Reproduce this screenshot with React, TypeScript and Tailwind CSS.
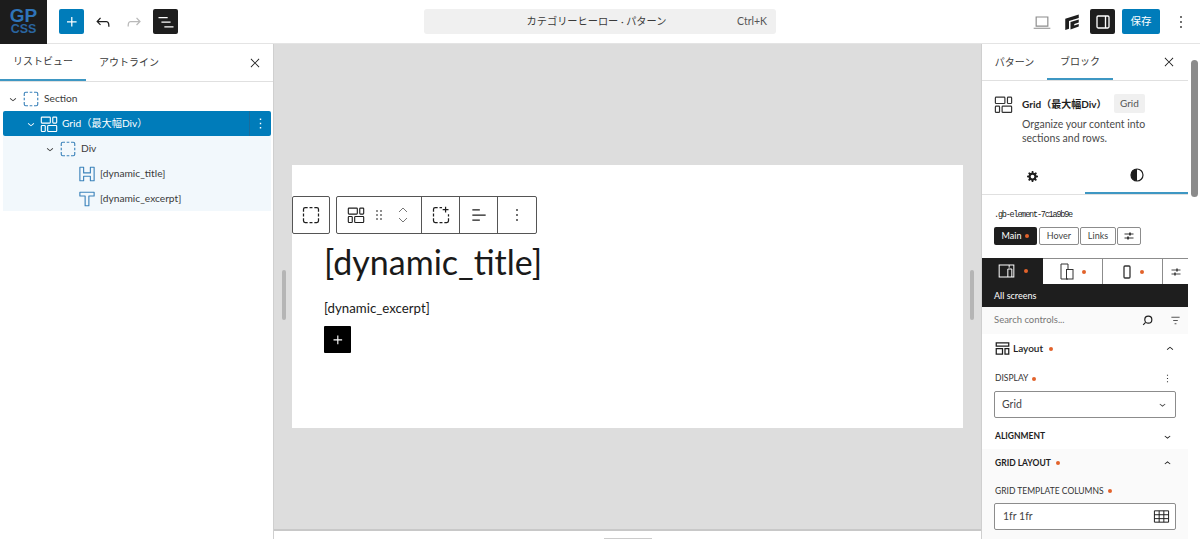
import React from 'react';

const font = { fontFamily: 'Lato, "Noto Sans CJK JP", sans-serif' };

type IconProps = { className?: string };

const Wp: React.FC<IconProps & { d: string }> = ({ d, className }) => (
  <svg viewBox="0 0 24 24" className={className} fill="currentColor">
    <path d={d} />
  </svg>
);

const PLUS = 'M11 12.5V17.5H12.5V12.5H17.5V11H12.5V6H11V11H6V12.5H11Z';
const UNDO = 'M18.3 11.7c-.6-.6-1.4-.9-2.3-.9H6.7l2.9-3.3-1.1-1-4.5 5L8.5 16l1-1-2.7-2.7H16c.5 0 .9.2 1.3.5 1 1 1 3.4 1 4.5v.3h1.5v-.2c0-1.5 0-4.3-1.5-5.7z';
const REDO = 'M15.6 6.5l-1.1 1 2.9 3.3H8c-.9 0-1.7.3-2.3.9-1.4 1.5-1.4 4.2-1.4 5.6v.2h1.5v-.3c0-1.1 0-3.5 1-4.5.3-.3.7-.5 1.3-.5h9.2L14.5 15l1.1 1.1 4.6-4.6-4.6-5z';
const LIST = 'M3 6h11v1.5H3V6zm3.5 5.5h11V13h-11v-1.5zM21 17H10v1.5h11V17z';
const CLOSE = 'm13.06 12 6.47-6.47-1.06-1.06L12 10.94 5.53 4.47 4.47 5.53 10.94 12l-6.47 6.47 1.06 1.06L12 13.06l6.47 6.47 1.06-1.06L13.06 12Z';
const MORE = 'M13 19h-2v-2h2v2zm0-6h-2v-2h2v2zm0-6h-2V5h2v2z';
const DOWN = 'M17.5 11.6L12 16l-5.5-4.4.9-1.2L12 14l4.5-3.6 1 1.2z';
const UP = 'M6.5 12.4L12 8l5.5 4.4-.9 1.2L12 10l-4.5 3.6-1-1.2z';
const DRAG = 'M8 7h2V5H8v2zm0 6h2v-2H8v2zm0 6h2v-2H8v2zm6-14v2h2V5h-2zm0 8h2v-2h-2v2zm0 6h2v-2h-2v2z';
const GEAR = 'M20.8 13.2v-2.4l-2.5-.4c-.2-.6-.4-1.1-.7-1.6l1.5-2.1-1.7-1.7-2.1 1.5c-.5-.3-1-.5-1.6-.7l-.4-2.5h-2.4l-.4 2.5c-.6.2-1.1.4-1.6.7L6.8 5 5 6.7l1.5 2.1c-.3.5-.5 1-.7 1.6l-2.5.4v2.4l2.5.4c.2.6.4 1.1.7 1.6L5 17.3 6.7 19l2.1-1.5c.5.3 1 .5 1.6.7l.4 2.5h2.4l.4-2.5c.6-.2 1.1-.4 1.6-.7l2.1 1.5 1.7-1.7-1.5-2.1c.3-.5.5-1 .7-1.6l2.6-.4zM12 15a3 3 0 1 1 0-6 3 3 0 0 1 0 6z';

const GridIcon: React.FC<IconProps> = ({ className }) => (
  <svg viewBox="0 0 24 24" className={className} fill="none" stroke="currentColor" strokeWidth="1.5">
    <rect x="1.75" y="2.75" width="12" height="8" rx="1" />
    <rect x="17" y="2.75" width="5.25" height="8" rx="1" />
    <rect x="1.75" y="14" width="5.25" height="8" rx="1" />
    <rect x="10.25" y="14" width="12" height="8" rx="1" />
  </svg>
);

const DashedBox: React.FC<IconProps> = ({ className }) => (
  <svg viewBox="0 0 24 24" className={className} fill="none" stroke="currentColor" strokeWidth="1.5">
    <path d="M3 8V5a2 2 0 0 1 2-2h3M10.25 3h3.5M16 3h3a2 2 0 0 1 2 2v3M21 10.25v3.5M21 16v3a2 2 0 0 1-2 2h-3M13.75 21h-3.5M8 21H5a2 2 0 0 1-2-2v-3M3 13.75v-3.5" />
  </svg>
);

const HeadingIcon: React.FC<IconProps> = ({ className }) => (
  <svg viewBox="0 0 24 24" className={className} fill="none" stroke="currentColor" strokeWidth="1.5" strokeLinejoin="round">
    <path d="M2.5 3h5v7.5h9V3h5v18h-5v-6h-9v6h-5z" />
  </svg>
);

const TextIcon: React.FC<IconProps> = ({ className }) => (
  <svg viewBox="0 0 24 24" className={className} fill="none" stroke="currentColor" strokeWidth="1.5" strokeLinejoin="round">
    <path d="M2.5 3h19v5h-7v13h-5V8h-7z" />
  </svg>
);

const Sliders: React.FC<IconProps> = ({ className }) => (
  <svg viewBox="0 0 24 24" className={className} fill="none" stroke="currentColor" strokeWidth="1.8">
    <path d="M3 8h18M3 16h18" />
    <path d="M14 5v6M10 13v6" strokeWidth="3" />
  </svg>
);

const Dot = () => <span className="inline-block h-[4px] w-[4px] rounded-full bg-[#e2622b]" />;

const ListRow: React.FC<{
  indent: string;
  chevron?: boolean;
  icon: React.ReactNode;
  label: string;
  selected?: boolean;
}> = ({ indent, chevron, icon, label, selected }) => (
  <div className={`flex h-[25px] items-center ${indent} ${selected ? 'rounded-[2px] bg-[#007cba] text-white' : 'text-[#3a3a3a]'}`}>
    <span className="flex w-[14px] justify-center">
      {chevron && <Wp d={DOWN} className="h-[14px] w-[14px] shrink-0" />}
    </span>
    <span className={`ml-[2px] ${selected ? 'text-white' : 'text-[#3b82ba]'}`}>{icon}</span>
    <span className="ml-[4px] whitespace-nowrap pt-[1px] text-[10.2px]">{label}</span>
    {selected && (
      <span className="ml-auto flex h-[25px] w-[22px] items-center justify-center border-l border-[#1b6c9c]">
        <Wp d={MORE} className="h-[17px] w-[17px]" />
      </span>
    )}
  </div>
);

const ListView = () => (
  <aside className="flex w-[274px] shrink-0 flex-col border-r border-[#cfcfcf] bg-white">
    <div className="flex h-[38px] shrink-0 items-stretch border-b border-[#e0e0e0] text-[#3a3a3a]">
      <div className="flex w-[86px] items-center justify-center border-b-2 border-[#3e97c3] text-[10px]">リストビュー</div>
      <div className="flex w-[86px] items-center justify-center text-[10px]">アウトライン</div>
      <div className="ml-auto flex w-[38px] items-center justify-center pl-[2px]">
        <Wp d={CLOSE} className="h-[14px] w-[14px] text-[#1e1e1e]" />
      </div>
    </div>
    <div className="pl-[3px] pr-[2px] pt-[4px]">
      <ListRow indent="pl-[3px]" chevron icon={<DashedBox className="h-[18px] w-[18px]" />} label="Section" />
      <ListRow indent="pl-[21px]" chevron selected icon={<GridIcon className="h-[18px] w-[18px]" />} label="Grid（最大幅Div）" />
      <div className="bg-[#f2f8fc]">
        <ListRow indent="pl-[40px]" chevron icon={<DashedBox className="h-[18px] w-[18px]" />} label="Div" />
        <ListRow indent="pl-[59px]" icon={<HeadingIcon className="h-[18px] w-[18px]" />} label="[dynamic_title]" />
        <ListRow indent="pl-[59px]" icon={<TextIcon className="h-[18px] w-[18px]" />} label="[dynamic_excerpt]" />
      </div>
    </div>
  </aside>
);

const ToolButton: React.FC<{ children: React.ReactNode; last?: boolean }> = ({ children, last }) => (
  <div className={`flex h-full w-[38px] items-center justify-center ${last ? '' : 'border-r border-[#555555]'}`}>{children}</div>
);

const Canvas = () => (
  <main className="relative flex min-w-0 flex-1 flex-col bg-[#dddddd]">
    <div className="flex-1 pl-[18px] pt-[121px]">
      <div className="relative h-[263px] w-[671px] bg-white pl-[32px] pt-[72px] text-[#1a1a1a]">
        <h1 className="text-[34px] leading-[50px]">[dynamic_title]</h1>
        <p className="mt-[11px] text-[13.25px] leading-[20px]">[dynamic_excerpt]</p>
        <div className="mt-[8px] flex h-[27px] w-[27px] items-center justify-center rounded-[1px] bg-black text-white">
          <Wp d={PLUS} className="h-[18px] w-[18px]" />
        </div>
        {/* floating block toolbar */}
        <div className="absolute left-0 top-[31px] flex h-[38px] gap-[6px] text-[#1e1e1e]">
          <div className="flex h-[38px] w-[38px] items-center justify-center rounded-[2px] border border-[#555555] bg-white">
            <DashedBox className="h-[20px] w-[20px]" />
          </div>
          <div className="flex h-[38px] items-center rounded-[2px] border border-[#555555] bg-white">
            <div className="flex h-full w-[85px] items-center border-r border-[#555555] pl-[10px]">
              <GridIcon className="h-[18px] w-[18px]" />
              <Wp d={DRAG} className="ml-[6px] h-[16px] w-[16px]" />
              <div className="ml-[11px] flex flex-col gap-[4px] text-[#777777]">
                <svg viewBox="0 0 10 6" className="h-[6px] w-[10px]" fill="none" stroke="currentColor"><path d="M1 5l4-4 4 4" /></svg>
                <svg viewBox="0 0 10 6" className="h-[6px] w-[10px]" fill="none" stroke="currentColor"><path d="M1 1l4 4 4-4" /></svg>
              </div>
            </div>
            <ToolButton>
              <svg viewBox="0 0 24 24" className="h-[20px] w-[20px]" fill="none" stroke="currentColor" strokeWidth="1.5">
                <path d="M3 8V5a2 2 0 0 1 2-2h3M10.25 3h3M3 10.25v3.5M3 16v3a2 2 0 0 0 2 2h3M10.25 21h3.5M16 21h3a2 2 0 0 0 2-2v-3M21 13.75V11M17.5 2v7M14 5.5h7" />
              </svg>
            </ToolButton>
            <ToolButton>
              <Wp d="M4 5h9v1.5H4V5zm0 6.25h16v1.5H4v-1.5zM4 17.5h9V19H4v-1.5z" className="h-[20px] w-[20px]" />
            </ToolButton>
            <ToolButton last>
              <Wp d={MORE} className="h-[20px] w-[20px]" />
            </ToolButton>
          </div>
        </div>
      </div>
    </div>
    <div className="flex h-[10px] shrink-0 justify-center border-t-2 border-[#c8c8c8] bg-white">
      <div className="mt-[7px] h-[2px] w-[48px] bg-[#cccccc]" />
    </div>
    {/* drag handles for the side panels */}
    <div className="absolute left-[8px] top-[226px] h-[50px] w-[4px] rounded-full bg-[#b5b5b5]" />
    <div className="absolute right-[7px] top-[226px] h-[50px] w-[4px] rounded-full bg-[#b5b5b5]" />
  </main>
);

const DeviceTab: React.FC<{ children: React.ReactNode; active?: boolean; w: string }> = ({ children, active, w }) => (
  <div className={`flex h-[26px] shrink-0 items-center justify-center gap-[8px] ${w} ${active ? 'bg-[#1e1e1e] text-white' : 'border-r border-t border-[#8c8c8c] bg-white text-[#333333]'}`}>
    {children}
  </div>
);

const SettingsPanel = () => (
  <aside className="relative flex w-[219px] shrink-0 flex-col overflow-hidden border-l border-[#cfcfcf] bg-white pr-[12px] text-[#1e1e1e]">
    <div className="flex h-[37px] shrink-0 items-stretch border-b border-[#e0e0e0] text-[10px] text-[#3a3a3a]">
      <div className="flex w-[65px] items-center justify-center">パターン</div>
      <div className="flex w-[66px] items-center justify-center border-b-2 border-[#3e97c3]">ブロック</div>
      <div className="ml-auto flex w-[38px] items-center justify-center">
        <Wp d={CLOSE} className="h-[14px] w-[14px] text-[#1e1e1e]" />
      </div>
    </div>
    <div className="flex h-[78px] shrink-0 px-[12px] pt-[13px]">
      <GridIcon className="mt-[1px] h-[19px] w-[19px] shrink-0 text-[#333333]" />
      <div className="ml-[9px]">
        <div className="flex items-start">
          <span className="w-[92px] whitespace-nowrap pt-[3px] text-[10px] font-bold">Grid（最大幅Div）</span>
          <span className="rounded-[2px] bg-[#f0f0f0] px-[6px] py-[3px] text-[10px] leading-[13px] text-[#555555]">Grid</span>
        </div>
        <p className="mt-[4px] w-[135px] text-[10.5px] leading-[14px] text-[#4a4a4a]">Organize your content into sections and rows.</p>
      </div>
    </div>
    <div className="flex h-[36px] shrink-0 border-b border-[#e0e0e0]">
      <div className="flex w-[103px] items-center justify-center pr-[2px]">
        <Wp d={GEAR} className="h-[15px] w-[15px]" />
      </div>
      <div className="flex w-[103px] items-center justify-center border-b-2 border-[#3e97c3] pb-[2px] pl-[1px]">
        <svg viewBox="0 0 24 24" className="h-[16px] w-[16px]">
          <circle cx="12" cy="12" r="9" fill="none" stroke="currentColor" strokeWidth="1.8" />
          <path d="M12 3a9 9 0 0 0 0 18z" fill="currentColor" />
        </svg>
      </div>
    </div>
    <div className="px-[12px] pt-[14px]">
      <p className="whitespace-nowrap font-['Liberation_Mono',monospace] text-[8.5px] leading-[12px] tracking-[-1.2px] text-[#1e1e1e]">.gb-element-7c1a9b9e</p>
      <div className="mt-[6px] flex h-[18px] gap-[2px] text-[9px]">
        <div className="flex w-[43px] items-center justify-center gap-[4px] rounded-[2px] bg-[#1e1e1e] text-white">Main <Dot /></div>
        <div className="flex w-[40px] items-center justify-center rounded-[2px] border border-[#8c8c8c] text-[#444444]">Hover</div>
        <div className="-ml-[1px] flex w-[36px] items-center justify-center rounded-[2px] border border-[#8c8c8c] text-[#444444]">Links</div>
        <div className="-ml-[1px] flex w-[24px] items-center justify-center rounded-[2px] border border-[#8c8c8c]">
          <Sliders className="h-[12px] w-[12px]" />
        </div>
      </div>
    </div>
    <div className="mt-[13px] flex shrink-0">
      <DeviceTab active w="w-[61px]">
        <svg viewBox="0 0 24 24" className="h-[16px] w-[19px]" fill="none" stroke="currentColor" strokeWidth="1.5">
          <rect x="1" y="3" width="22" height="18" />
          <path d="M14 21V9h6v12" />
          <path d="M16 3v4" />
        </svg>
        <Dot />
      </DeviceTab>
      <DeviceTab w="w-[60px]">
        <svg viewBox="0 0 14 17" className="h-[17px] w-[14px]" fill="none" stroke="currentColor">
          <path d="M8 16H1V1h7v5" />
          <rect x="6.5" y="6.5" width="6.5" height="9.5" />
        </svg>
        <Dot />
      </DeviceTab>
      <DeviceTab w="w-[60px]">
        <svg viewBox="0 0 10 14" className="h-[14px] w-[10px]" fill="none" stroke="currentColor" strokeWidth="1.3">
          <rect x="2" y="1" width="6" height="12" rx="1" />
        </svg>
        <Dot />
      </DeviceTab>
      <DeviceTab w="w-[25px] !border-r-0">
        <Sliders className="h-[12px] w-[12px]" />
      </DeviceTab>
    </div>
    <div className="flex h-[23px] shrink-0 items-center bg-[#1e1e1e] pl-[12px] text-[9px] text-white">All screens</div>
    <div className="flex h-[27px] shrink-0 items-center bg-[#fafafa] pl-[12px] pr-[7px] text-[9.5px] text-[#777777]">
      <span>Search controls...</span>
      <svg viewBox="0 0 24 24" className="ml-auto h-[13px] w-[13px] text-[#1e1e1e]" fill="none" stroke="currentColor" strokeWidth="2.2">
        <circle cx="13.5" cy="10.5" r="6.5" />
        <path d="M8.5 15.5L4 20" />
      </svg>
      <svg viewBox="0 0 24 24" className="ml-[16px] h-[11px] w-[11px] text-[#555555]" fill="none" stroke="currentColor" strokeWidth="2.4">
        <path d="M3 5h18M7 12h10M10 19h4" />
      </svg>
    </div>
    <div className="flex h-[28px] shrink-0 items-center pl-[13px] pr-[11px] pt-[1px]">
      <svg viewBox="0 0 24 24" className="h-[15px] w-[15px]" fill="none" stroke="currentColor" strokeWidth="2">
        <path d="M2 3h20v5H2zM2 12h10v9H2zM16 12h6v9h-6z" />
      </svg>
      <span className="ml-[3px] text-[10px] font-semibold">Layout</span>
      <span className="ml-[6px] flex"><Dot /></span>
      <Wp d={UP} className="ml-auto h-[14px] w-[14px]" />
    </div>
    <div className="mt-[5px] flex h-[20px] shrink-0 items-center pl-[13px] pr-[14px] pt-[3px] text-[8.5px] text-[#333333]">
      <span>DISPLAY</span>
      <span className="ml-[4px] flex"><Dot /></span>
      <Wp d={MORE} className="ml-auto h-[13px] w-[13px]" />
    </div>
    <div className="mx-[12px] mt-[4px] flex h-[27px] shrink-0 items-center justify-between rounded-[2px] border border-[#8c8c8c] pl-[7px] pr-[6px] text-[10.5px] text-[#444444]">
      <span>Grid</span>
      <Wp d={DOWN} className="h-[13px] w-[13px]" />
    </div>
    <div className="mt-[5px] flex h-[26px] shrink-0 items-center pl-[13px] pr-[14px] text-[8.5px] font-bold">
      <span>ALIGNMENT</span>
      <Wp d={DOWN} className="ml-auto h-[13px] w-[13px]" />
    </div>
    <div className="flex-1 bg-[#fafafa]">
      <div className="flex h-[26px] items-center pl-[13px] pr-[14px] pt-[2px] text-[8.5px] font-bold">
        <span>GRID LAYOUT</span>
        <span className="ml-[5px] flex"><Dot /></span>
        <Wp d={UP} className="ml-auto h-[13px] w-[13px]" />
      </div>
      <div className="mt-[8px] flex h-[16px] items-center pl-[13px] text-[8.5px] text-[#333333]">
        <span>GRID TEMPLATE COLUMNS</span>
        <span className="ml-[4px] flex"><Dot /></span>
      </div>
      <div className="mx-[12px] mt-[4px] flex h-[27px] items-center justify-between rounded-[2px] border border-[#8c8c8c] bg-white pl-[8px] pr-[5px] text-[10.5px] text-[#444444]">
        <span>1fr 1fr</span>
        <svg viewBox="0 0 24 24" className="h-[17px] w-[17px] text-[#1e1e1e]" fill="none" stroke="currentColor" strokeWidth="1.4">
          <path d="M2 4h20v16H2zM2 9.5h20M2 15h20M8.7 4v16M15.3 4v16" />
        </svg>
      </div>
    </div>
    {/* panel scrollbar */}
    <div className="absolute right-[2px] top-[16px] h-[137px] w-[7px] rounded-full bg-[#8b8b8b]" />
  </aside>
);

const TopBar = () => (
  <header className="flex h-[44px] shrink-0 items-center border-b border-[#e4e4e4] bg-white text-[#1e1e1e]">
    <div className="h-[44px] w-[47px] shrink-0 bg-[#1c1c1c]">
      <svg viewBox="0 0 47 44" className="h-[44px] w-[47px]" fontFamily="Liberation Sans, sans-serif" fontWeight="700" textAnchor="middle">
        <text x="23.5" y="22" fontSize="19" fill="#2f74b8">GP</text>
        <text x="23.5" y="33" fontSize="12.5" fill="#2a65a0">CSS</text>
      </svg>
    </div>
    <div className="ml-[12px] flex h-[25px] w-[25px] items-center justify-center rounded-[2px] bg-[#007cba] text-white">
      <Wp d={PLUS} className="h-[20px] w-[20px]" />
    </div>
    <Wp d={UNDO} className="ml-[9px] h-[20px] w-[20px]" />
    <Wp d={REDO} className="ml-[11px] h-[20px] w-[20px] text-[#b9b9b9]" />
    <div className="ml-[9px] flex h-[25px] w-[25px] items-center justify-center rounded-[2px] bg-[#1e1e1e] text-white">
      <Wp d={LIST} className="h-[20px] w-[20px]" />
    </div>
    <div className="relative ml-[246px] flex h-[25px] w-[352px] items-center justify-center rounded-[3px] bg-[#f0f0f0] text-[10.2px] text-[#3a3a3a]">
      <span className="-ml-[7px]">カテゴリーヒーロー · パターン</span>
      <span className="absolute right-[9px] text-[10.5px] text-[#555555]">Ctrl+K</span>
    </div>
    <svg viewBox="0 0 24 24" className="ml-[256px] h-[20px] w-[20px] text-[#8c8c8c]" fill="none" stroke="currentColor" strokeWidth="1.4">
      <path d="M5 6h14v11H5zM2 19.5h20" />
    </svg>
    <svg viewBox="0 0 24 24" className="ml-[11px] h-[18px] w-[18px]" fill="currentColor">
      <path d="M3 7.5L21 2v4.5L8 10.5V21l-5 1.5zM10 12l11-3.5v4L15 14.5v2l6-2V18l-11 4z" />
    </svg>
    <div className="ml-[9px] flex h-[25px] w-[25px] items-center justify-center rounded-[2px] bg-[#1e1e1e] text-white">
      <svg viewBox="0 0 24 24" className="h-[20px] w-[20px]" fill="none" stroke="currentColor" strokeWidth="1.6">
        <rect x="4.8" y="4.8" width="14.4" height="14.4" rx="1.4" />
        <path d="M15 4.8v14.4" />
      </svg>
    </div>
    <div className="ml-[7px] flex h-[25px] w-[38px] items-center justify-center rounded-[2px] bg-[#007cba] text-[10.5px] text-white">保存</div>
    <Wp d={MORE} className="ml-[11px] h-[20px] w-[20px]" />
  </header>
);

export default function App() {
  return (
    <div style={font} className="flex h-[539px] w-[1200px] flex-col overflow-hidden bg-white">
      <TopBar />
      <div className="flex min-h-0 flex-1">
        <ListView />
        <Canvas />
        <SettingsPanel />
      </div>
    </div>
  );
}
